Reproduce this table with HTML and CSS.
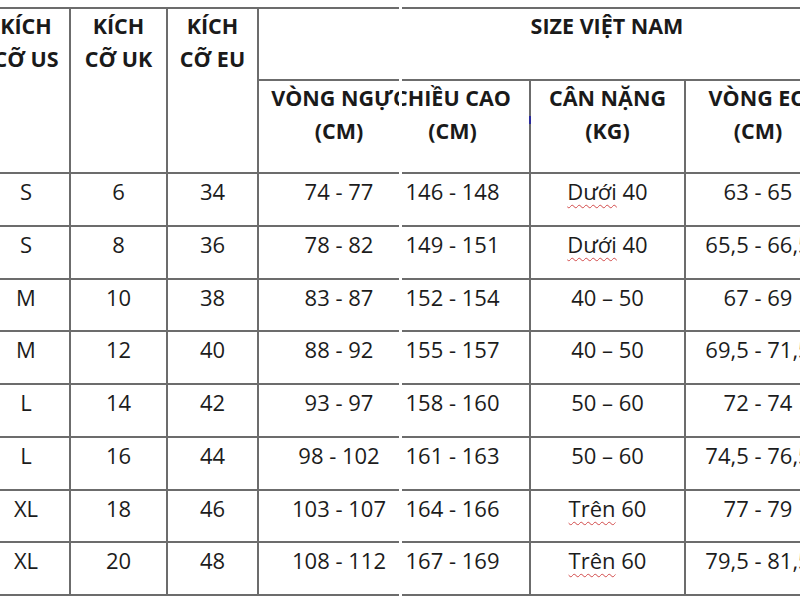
FILE: index.html
```html
<!DOCTYPE html>
<html lang="vi">
<head>
<meta charset="utf-8">
<title>Bảng size</title>
<link rel="stylesheet" href="styles.css">
</head>
<body>
<div class="sheet">
  <div class="panel panel-left">
    <div class="grid grid-left">
      <div class="cell head tall">KÍCH<br>CỠ US</div>
      <div class="cell head tall">KÍCH<br>CỠ UK</div>
      <div class="cell head tall">KÍCH<br>CỠ EU</div>
      <div class="cell head"></div>
      <div class="cell head">VÒNG NGỰC<br>(CM)</div>

      <div class="cell">S</div><div class="cell">6</div><div class="cell">34</div><div class="cell">74 - 77</div>
      <div class="cell">S</div><div class="cell">8</div><div class="cell">36</div><div class="cell">78 - 82</div>
      <div class="cell">M</div><div class="cell">10</div><div class="cell">38</div><div class="cell">83 - 87</div>
      <div class="cell">M</div><div class="cell">12</div><div class="cell">40</div><div class="cell">88 - 92</div>
      <div class="cell">L</div><div class="cell">14</div><div class="cell">42</div><div class="cell">93 - 97</div>
      <div class="cell">L</div><div class="cell">16</div><div class="cell">44</div><div class="cell">98 - 102</div>
      <div class="cell">XL</div><div class="cell">18</div><div class="cell">46</div><div class="cell">103 - 107</div>
      <div class="cell">XL</div><div class="cell">20</div><div class="cell">48</div><div class="cell">108 - 112</div>
    </div>
  </div>
  <div class="panel panel-right">
    <div class="grid grid-right">
      <div class="cell head wide">SIZE VIỆT NAM</div>
      <div class="cell head">CHIỀU CAO<br>(CM)</div>
      <div class="cell head">CÂN NẶNG<br>(KG)</div>
      <div class="cell head">VÒNG EO<br>(CM)</div>

      <div class="cell">146 - 148</div><div class="cell"><span class="spell">Dưới</span> 40</div><div class="cell">63 - 65</div>
      <div class="cell">149 - 151</div><div class="cell"><span class="spell">Dưới</span> 40</div><div class="cell">65,5 - 66,5</div>
      <div class="cell">152 - 154</div><div class="cell">40 – 50</div><div class="cell">67 - 69</div>
      <div class="cell">155 - 157</div><div class="cell">40 – 50</div><div class="cell">69,5 - 71,5</div>
      <div class="cell">158 - 160</div><div class="cell">50 – 60</div><div class="cell">72 - 74</div>
      <div class="cell">161 - 163</div><div class="cell">50 – 60</div><div class="cell">74,5 - 76,5</div>
      <div class="cell">164 - 166</div><div class="cell"><span class="spell">Trên</span> 60</div><div class="cell">77 - 79</div>
      <div class="cell">167 - 169</div><div class="cell"><span class="spell">Trên</span> 60</div><div class="cell">79,5 - 81,5</div>
      <span class="caret-mark"></span>
    </div>
  </div>
</div>
</body>
</html>
```

FILE: styles.css
```css
html, body {
  margin: 0;
  padding: 0;
  background: #ffffff;
}

body {
  font-family: "Open Sans", "Liberation Sans", sans-serif;
  color: #1c1c1c;
}

.sheet {
  display: flex;
  gap: 3px;
  width: 800px;
  height: 600px;
  overflow: hidden;
  background: #ffffff;
}

.panel {
  overflow: hidden;
  height: 600px;
}

.panel-left {
  width: 399px;
  flex: none;
}

.panel-right {
  flex: 1;
  position: relative;
}

.grid {
  display: grid;
  gap: 2px;
  background: #6c6c6c;
  padding: 2px 0;
  margin-top: 7px;
  width: max-content;
  grid-template-rows: 70px 91px repeat(8, 50.75px);
  position: relative;
}

.grid-left {
  grid-template-columns: 86px 95px 89px 160px;
  margin-left: -17px;
}

.grid-right {
  grid-template-columns: 153px 153px 144px;
  margin-left: -26px;
}

.cell {
  background: #ffffff;
  text-align: center;
  font-size: 22px;
  line-height: 30px;
  padding-top: 2px;
  white-space: nowrap;
}

.head {
  font-size: 21.5px;
  font-weight: 700;
  line-height: 33px;
  padding-top: 0;
  color: #1a1a1a;
}

.tall {
  grid-row: span 2;
}

.wide {
  grid-column: span 3;
  padding-left: 8px;
}

.spell {
  text-decoration: underline wavy #d24a4a;
  text-decoration-thickness: 1px;
  text-underline-offset: 4px;
}

.caret-mark {
  position: absolute;
  left: 153px;
  top: 109px;
  width: 2px;
  height: 8px;
  background: #2b2b9c;
}
```
